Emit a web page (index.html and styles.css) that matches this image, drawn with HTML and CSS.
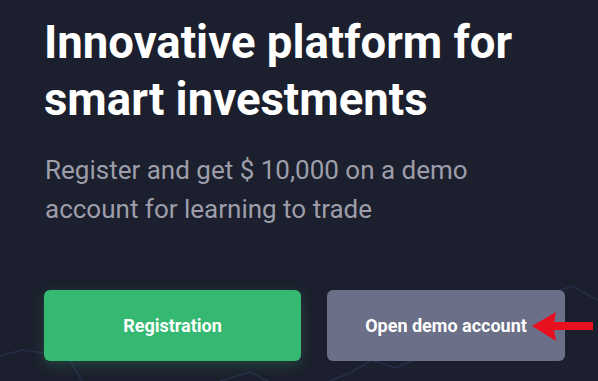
FILE: index.html
```html
<!DOCTYPE html>
<html lang="en">
<head>
<meta charset="utf-8">
<link rel="stylesheet" href="styles.css">
</head>
<body>
<main class="hero">
  <svg class="bg-chart" width="598" height="381" viewBox="0 0 598 381" aria-hidden="true">
    <polyline points="0,356 22,350 45,353 62,346 82,381" />
    <polyline points="330,381 352,372 372,360 395,368 420,358" />
    <polyline points="555,292 572,286 598,300" />
    <polyline points="220,381 250,372 268,381" />
  </svg>
  <h1 class="title">Innovative platform for<br>smart investments</h1>
  <p class="subtitle">Register and get $ 10,000 on a demo<br>account for learning to trade</p>
  <div class="actions">
    <a class="btn btn-green">Registration</a>
    <a class="btn btn-grey">Open demo account
      <svg class="arrow" width="62" height="32" viewBox="0 0 62 32" aria-hidden="true">
        <polygon points="0,15 24,1 22,11 61,11 61,19 22,19 24,30" />
      </svg>
    </a>
  </div>
</main>
</body>
</html>
```
FILE: styles.css
```css
html, body {
  margin: 0;
  padding: 0;
  background: #1c1f2d;
}
.hero {
  position: relative;
  width: 598px;
  height: 381px;
  overflow: hidden;
  box-sizing: border-box;
  padding: 14px 0 0 44px;
  font-family: Roboto, "Liberation Sans", sans-serif;
  background: #1c1f2d;
}
.bg-chart {
  position: absolute;
  left: 0;
  top: 0;
}
.bg-chart polyline {
  fill: none;
  stroke: #253048;
  stroke-width: 1.5;
}
.title {
  position: relative;
  margin: 0;
  font-size: 45.5px;
  line-height: 57px;
  font-weight: 700;
  color: #ffffff;
}
.subtitle {
  position: relative;
  margin: 23px 0 0 1px;
  font-size: 26px;
  line-height: 39px;
  font-weight: 400;
  color: #9d9eaa;
}
.actions {
  position: relative;
  display: flex;
  gap: 26px;
  margin-top: 61px;
}
.btn {
  position: relative;
  display: flex;
  align-items: center;
  justify-content: center;
  height: 71px;
  border-radius: 6px;
  color: #ffffff;
  font-size: 18px;
  font-weight: 700;
  box-sizing: border-box;
}
.btn-green {
  width: 257px;
  background: #35b972;
  box-shadow: 0 4px 14px rgba(53, 185, 114, 0.25);
}
.btn-grey {
  width: 238px;
  background: #6b6f87;
}
.arrow {
  position: absolute;
  left: 205px;
  top: 21px;
}
.arrow polygon {
  fill: #e8101e;
}
```
